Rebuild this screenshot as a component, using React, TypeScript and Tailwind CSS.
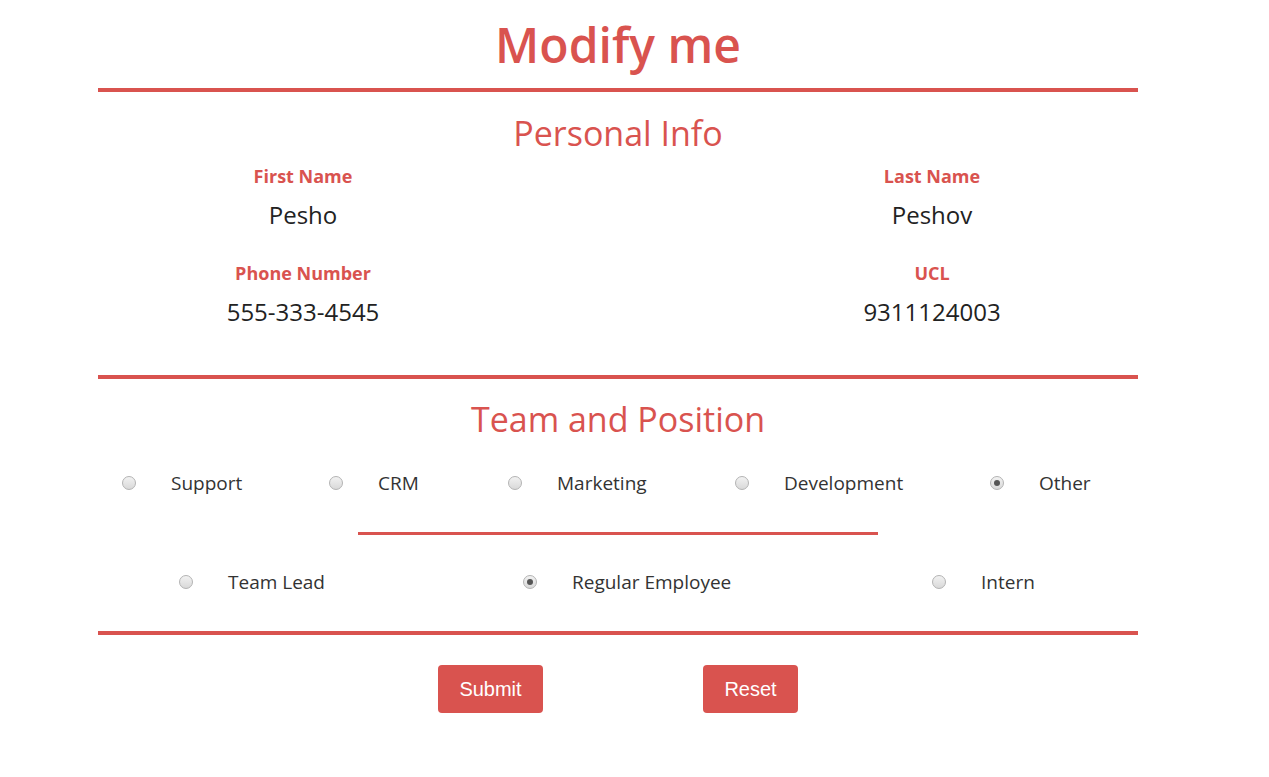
import React from "react";

const red = "text-[#d9534f]";

function Radio({ checked }: { checked?: boolean }) {
  return (
    <span className="w-[14px] h-[14px] shrink-0 rounded-full border border-[#b3b3b3] bg-gradient-to-b from-[#f2f2f2] to-[#d9d9d9] flex items-center justify-center">
      {checked && <span className="w-[6px] h-[6px] rounded-full bg-[#555]" />}
    </span>
  );
}

function Option({ label, width, checked }: { label: string; width?: string; checked?: boolean }) {
  return (
    <label className={`flex items-center h-[40px] ${width ?? ""}`}>
      <Radio checked={checked} />
      <span className="ml-[35px] text-[19px] text-[#333]">{label}</span>
    </label>
  );
}

function Field({ label, value }: { label: string; value: string }) {
  return (
    <div className="flex flex-col items-center">
      <div className={`h-[24px] leading-[24px] text-[18px] font-bold ${red}`}>{label}</div>
      <div className="mt-[11px] h-[32px] leading-[32px] text-[24px] font-medium text-[#222]">{value}</div>
    </div>
  );
}

export default function App() {
  return (
    <div className="w-full min-h-screen bg-white font-['Open_Sans','Noto_Sans',sans-serif]">
      <div className="w-[1040px] ml-[98px] pt-[15px] pb-[64px]">
        <h1 className={`text-center text-[48px] font-semibold leading-[60px] ${red}`}>Modify me</h1>
        <div className="mt-[13px] h-[4px] bg-[#d9534f]" />

        {/* Personal info */}
        <h2 className={`mt-[17px] text-center text-[34px] font-medium leading-[48px] ${red}`}>Personal Info</h2>
        <div className="mt-[7px] grid grid-cols-[410px_1fr_412px] gap-y-[30px]">
          <Field label="First Name" value="Pesho" />
          <div />
          <Field label="Last Name" value="Peshov" />
          <Field label="Phone Number" value="555-333-4545" />
          <div />
          <Field label="UCL" value="9311124003" />
        </div>
        <div className="mt-[47px] h-[4px] bg-[#d9534f]" />

        {/* Team and position */}
        <h2 className={`mt-[16px] text-center text-[34px] font-medium leading-[48px] ${red}`}>Team and Position</h2>
        <div className="mt-[20px] flex pl-[24px]">
          <Option label="Support" width="w-[207px]" />
          <Option label="CRM" width="w-[179px]" />
          <Option label="Marketing" width="w-[227px]" />
          <Option label="Development" width="w-[255px]" />
          <Option label="Other" checked />
        </div>
        <div className="mt-[29px] mx-auto w-[520px] h-[3px] bg-[#d9534f]" />
        <div className="mt-[27px] flex pl-[81px]">
          <Option label="Team Lead" width="w-[344px]" />
          <Option label="Regular Employee" width="w-[409px]" checked />
          <Option label="Intern" />
        </div>
        <div className="mt-[29px] h-[4px] bg-[#d9534f]" />

        <div className="mt-[30px] flex justify-center gap-[160px] font-['Liberation_Sans',Arial,sans-serif]">
          <button className="w-[105px] h-[48px] rounded-[4px] bg-[#d9534f] text-white text-[20px]">Submit</button>
          <button className="w-[95px] h-[48px] rounded-[4px] bg-[#d9534f] text-white text-[20px]">Reset</button>
        </div>
      </div>
    </div>
  );
}
